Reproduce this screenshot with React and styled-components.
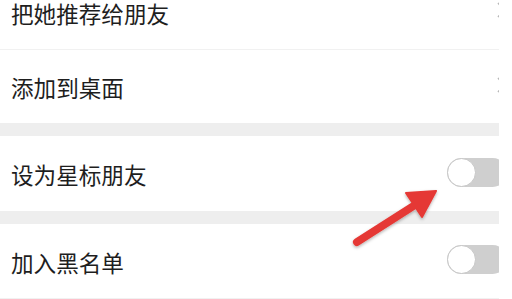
import React from "react";
import styled, { createGlobalStyle } from "styled-components";

const GlobalStyle = createGlobalStyle`
  html, body {
    margin: 0;
    padding: 0;
    background: #ffffff;
  }
  body {
    font-family: "Noto Sans CJK SC", "Noto Sans", sans-serif;
  }
`;

const Page = styled.div`
  position: relative;
  width: 512px;
  height: 299px;
  overflow: hidden;
  background: #ffffff;
`;

// the list is scrolled, so the first row is cut off at the top
const List = styled.div`
  width: 499px;
  margin-top: -23px;
  overflow: hidden;
  background: #ffffff;
`;

const Row = styled.div`
  display: flex;
  align-items: center;
  justify-content: space-between;
  height: ${(p) => p.h || 75}px;
  padding-left: 11px;
  box-sizing: border-box;
  border-bottom: ${(p) => (p.line ? "1.5px solid #f1f1f1" : "none")};
`;

const Label = styled.span`
  font-size: 22.6px;
  color: #1e1e1e;
  line-height: 1;
  padding-top: ${(p) => p.pt || 4}px;
  white-space: nowrap;
`;

const Band = styled.div`
  height: 13px;
  background: #eeeeee;
`;

const Chevron = styled.svg`
  flex: none;
  width: 12px;
  height: 18px;
  margin-right: -9px;
  margin-top: ${(p) => p.mt || -4}px;
`;

const Toggle = styled.div`
  position: relative;
  flex: none;
  width: 60px;
  height: 29px;
  margin-right: -8px;
  margin-top: -3px;
  border-radius: 15px;
  background: #cfcfcf;
`;

const Knob = styled.div`
  position: absolute;
  left: 0;
  top: 0;
  width: 29px;
  height: 29px;
  box-sizing: border-box;
  border-radius: 50%;
  background: #ffffff;
  border: 1.5px solid #c6c6c6;
`;

const Arrow = styled.svg`
  position: absolute;
  left: 340px;
  top: 180px;
  width: 110px;
  height: 80px;
  overflow: visible;
`;

const Chev = ({ mt }) => (
  <Chevron viewBox="0 0 12 18" mt={mt}>
    <path d="M2 2 L9 9 L2 16" fill="none" stroke="#b8b8b8" strokeWidth="1.6" />
  </Chevron>
);

const Switch = () => (
  <Toggle>
    <Knob />
  </Toggle>
);

const rows = [
  { label: "把她推荐给朋友", kind: "link", h: 73, pt: 2, mt: -6 },
  { label: "添加到桌面", kind: "link", h: 73 },
  { band: true },
  { label: "设为星标朋友", kind: "switch" },
  { band: true },
  { label: "加入黑名单", kind: "switch", line: true },
];

const App = () => {
  return (
    <>
      <GlobalStyle />
      <Page>
        <List>
          {rows.map((r, i) =>
            r.band ? (
              <Band key={i} />
            ) : (
              <Row key={i} line={i === 0 || r.line} h={r.h}>
                <Label pt={r.pt}>{r.label}</Label>
                {r.kind === "link" ? <Chev mt={r.mt} /> : <Switch />}
              </Row>
            )
          )}
        </List>
        <Arrow viewBox="340 180 110 80">
          <defs>
            <filter id="shadow" x="-20%" y="-20%" width="140%" height="140%">
              <feDropShadow dx="0" dy="1.5" stdDeviation="1.5" floodColor="#000" floodOpacity="0.3" />
            </filter>
          </defs>
          <g filter="url(#shadow)" fill="#e53935" stroke="#e53935">
            <path d="M357 242 L415 205" strokeWidth="8" strokeLinecap="round" fill="none" />
            <path d="M436 191 L406 193 L422 217 Z" strokeWidth="2" strokeLinejoin="round" />
          </g>
        </Arrow>
      </Page>
    </>
  );
};

export default App;
